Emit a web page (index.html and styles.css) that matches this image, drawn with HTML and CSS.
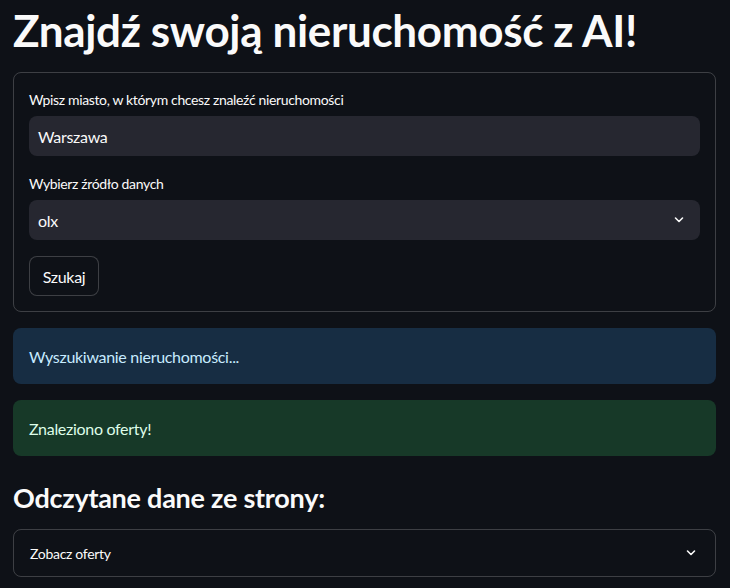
FILE: index.html
```html
<!DOCTYPE html>
<html lang="pl">
<head>
<meta charset="utf-8">
<link rel="stylesheet" href="styles.css">
</head>
<body>
<main class="page">
  <h1 class="title">Znajdź swoją nieruchomość z AI!</h1>
  <section class="form">
    <label class="label">Wpisz miasto, w którym chcesz znaleźć nieruchomości</label>
    <div class="input">Warszawa</div>
    <label class="label label-gap">Wybierz źródło danych</label>
    <div class="input select">
      <span>olx</span>
      <svg class="chev" width="12" height="12" viewBox="0 0 24 24"><path d="M5 8l7 7 7-7" fill="none" stroke="#fafafa" stroke-width="3.2" stroke-linecap="round" stroke-linejoin="round"/></svg>
    </div>
    <div class="btn-row"><button class="btn">Szukaj</button></div>
  </section>
  <div class="alert info">Wyszukiwanie nieruchomości...</div>
  <div class="alert success">Znaleziono oferty!</div>
  <h3 class="subtitle">Odczytane dane ze strony:</h3>
  <div class="expander">
    <span>Zobacz oferty</span>
    <svg class="chev" width="12" height="12" viewBox="0 0 24 24"><path d="M5 8l7 7 7-7" fill="none" stroke="#fafafa" stroke-width="3.2" stroke-linecap="round" stroke-linejoin="round"/></svg>
  </div>
</main>
</body>
</html>
```
FILE: styles.css
```css
html, body {
  margin: 0;
  background: #0e1117;
  color: #fafafa;
  font-family: Lato, "Open Sans", sans-serif;
  letter-spacing: -0.3px;
}
.page {
  display: flex;
  flex-direction: column;
  padding: 0 14px 0 13px;
}
.title {
  margin: 0;
  font-size: 44px;
  font-weight: 700;
  letter-spacing: -0.35px;
  line-height: 60px;
  height: 72px;
}
.form {
  display: flex;
  flex-direction: column;
  border: 1px solid rgba(250,250,250,0.2);
  border-radius: 8px;
  padding: 15px;
}
.label {
  font-size: 14px;
  letter-spacing: -0.35px;
  height: 24px;
  line-height: 24px;
  margin-bottom: 4px;
}
.label-gap { margin-top: 16px; }
.input {
  height: 40px;
  background: #262730;
  border-radius: 8px;
  padding: 0 9px;
  display: flex;
  align-items: center;
  font-size: 16px;
}
.select { justify-content: space-between; padding-right: 15px; }
.btn-row { margin-top: 16px; display: flex; }
.btn {
  height: 40px;
  width: 70px;
  background: #0e1117;
  color: #fafafa;
  border: 1px solid rgba(250,250,250,0.2);
  border-radius: 8px;
  font-family: inherit;
  letter-spacing: -0.3px;
  font-size: 16px;
  padding: 0;
}
.alert {
  margin-top: 16px;
  height: 56px;
  border-radius: 8px;
  padding: 0 16px;
  display: flex;
  align-items: center;
  font-size: 16px;
}
.info { background: #172d43; color: #c7ebff; }
.success { background: #173928; color: #dffde9; }
.subtitle {
  margin: 0;
  height: 73px;
  display: flex;
  align-items: center;
  padding-top: 10px;
  box-sizing: border-box;
  font-size: 27px;
  letter-spacing: -0.25px;
  font-weight: 700;
}
.expander {
  height: 48px;
  box-sizing: border-box;
  border: 1px solid rgba(250,250,250,0.2);
  border-radius: 8px;
  display: flex;
  align-items: center;
  justify-content: space-between;
  padding: 0 18px 0 16px;
  font-size: 14px;
}
.chev { display: block; }
```
